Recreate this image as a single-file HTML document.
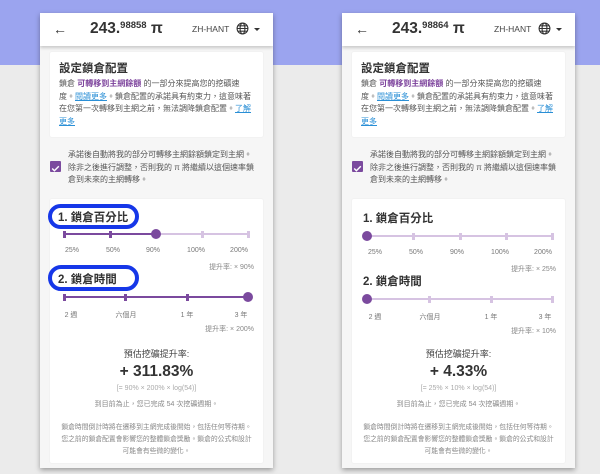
<!DOCTYPE html>
<html><head><meta charset="utf-8"><style>
*{margin:0;padding:0;box-sizing:border-box}
body{width:600px;height:474px;overflow:hidden;position:relative;background:#ebebeb;font-family:"Liberation Sans","Noto Sans CJK TC",sans-serif;color:#333}
.top{position:absolute;left:0;top:0;width:600px;height:65px;background:#9ba4ef}
.panel{position:absolute;top:13px;width:233px;height:455px;background:#f6f6f6;box-shadow:0 2px 5px rgba(0,0,0,.35);overflow:hidden}
.hdr{position:absolute;left:0;top:0;width:233px;height:33px;background:#fff;box-shadow:0 2px 3px rgba(0,0,0,.18);z-index:2}
.arrow{position:absolute;left:13px;top:8px;font-size:14px;color:#333}
.bal{position:absolute;left:50px;top:7px;font-size:15.5px;font-weight:bold;color:#333;white-space:nowrap}
.bal sup{font-size:9.5px;font-weight:bold;vertical-align:5px}
.lang{position:absolute;left:152px;top:11px;font-size:8.5px;color:#444}
.globe{position:absolute;left:196px;top:9px}
.caret{position:absolute;left:214px;top:15px;width:0;height:0;border-left:3px solid transparent;border-right:3px solid transparent;border-top:3.5px solid #333}
.card{position:absolute;left:10px;width:213px;background:#fff;border-radius:2px;box-shadow:0 0 2px rgba(0,0,0,.06)}
.t{position:absolute;white-space:nowrap}
.ttl{font-size:11.5px;font-weight:bold;color:#333}
.body{font-size:8px;color:#555;line-height:12.5px}
.pur{color:#7a3f9a;font-weight:bold}
.lnk{color:#2a8fd6;text-decoration:underline}
.cb{position:absolute;left:10px;top:148px;width:11px;height:11px;background:#7b4a9e;border-radius:1px}
.track{position:absolute;height:2px;background:#d6c3e2}
.fill{position:absolute;height:2px;background:#7b4a9e}
.tk{position:absolute;width:3px;height:7px;margin-left:-1.5px;margin-top:-2.5px}
.knob{position:absolute;width:10px;height:10px;border-radius:5px;background:#7b4a9e;margin-left:-5px;margin-top:-4px}
.lbl{position:absolute;font-size:7px;color:#777;transform:translateX(-50%);white-space:nowrap}
.rate{position:absolute;right:19px;font-size:7px;color:#888;white-space:nowrap}
.c{position:absolute;left:0;width:233px;text-align:center;white-space:nowrap}
.ring{position:absolute;border:4px solid #1637e8;border-radius:13px}
</style></head><body>
<div class="top"></div>

<!-- LEFT PANEL -->
<div class="panel" style="left:40px">
 <div class="hdr">
  <div class="arrow">←</div>
  <div class="bal">243.<sup>98858</sup> π</div>
  <div class="lang">ZH-HANT</div>
  <svg class="globe" width="13" height="13" viewBox="0 0 24 24"><circle cx="12" cy="12" r="10" fill="none" stroke="#333" stroke-width="2"/><ellipse cx="12" cy="12" rx="4.5" ry="10" fill="none" stroke="#333" stroke-width="2"/><path d="M2 12h20M4 7h16M4 17h16" stroke="#333" stroke-width="2"/></svg>
  <div class="caret"></div>
 </div>
 <div class="card" style="top:39px;height:85px">
  <div class="t ttl" style="left:9px;top:8px">設定鎖倉配置</div>
  <div class="t body" style="left:9px;top:26px">鎖倉 <span class="pur">可轉移到主網餘額</span> 的一部分來提高您的挖礦速<br>度。<span class="lnk">閱讀更多</span>。鎖倉配置的承諾具有約束力，這意味著<br>在您第一次轉移到主網之前，無法調降鎖倉配置。<span class="lnk">了解</span><br><span class="lnk">更多</span></div>
 </div>
 <div class="cb"><svg width="11" height="11" viewBox="0 0 10 10"><path d="M2 5l2 2 4-4" stroke="#fff" stroke-width="1.3" fill="none"/></svg></div>
 <div class="t body" style="left:28px;top:136px">承諾後自動將我的部分可轉移主網餘額鎖定到主網。<br>除非之後進行調整，否則我的 π 將繼續以這個速率鎖<br>倉到未來的主網轉移。</div>
 <div class="card" style="top:186px;height:264px"></div>
 <div class="t ttl" style="left:18px;top:196px">1. 鎖倉百分比</div>
 <div class="track" style="left:24px;width:184px;top:220px"></div>
 <div class="fill" style="left:24px;width:92px;top:220px"></div>
 <div class="tk" style="left:24px;top:220px;background:#7b4a9e"></div>
 <div class="tk" style="left:70px;top:220px;background:#7b4a9e"></div>
 <div class="tk" style="left:162px;top:220px;background:#d6c3e2"></div>
 <div class="tk" style="left:208px;top:220px;background:#d6c3e2"></div>
 <div class="knob" style="left:116px;top:220px"></div>
 <div class="lbl" style="left:32px;top:234px">25%</div><div class="lbl" style="left:73px;top:234px">50%</div><div class="lbl" style="left:113px;top:234px">90%</div><div class="lbl" style="left:156px;top:234px">100%</div><div class="lbl" style="left:199px;top:234px">200%</div>
 <div class="rate" style="top:249px">提升率: × 90%</div>
 <div class="t ttl" style="left:18px;top:258px">2. 鎖倉時間</div>
 <div class="track" style="left:24px;width:184px;top:283px"></div>
 <div class="fill" style="left:24px;width:184px;top:283px"></div>
 <div class="tk" style="left:24px;top:283px;background:#7b4a9e"></div>
 <div class="tk" style="left:85px;top:283px;background:#7b4a9e"></div>
 <div class="tk" style="left:147px;top:283px;background:#7b4a9e"></div>
 <div class="knob" style="left:208px;top:283px"></div>
 <div class="lbl" style="left:31px;top:297px">2 週</div><div class="lbl" style="left:86px;top:297px">六個月</div><div class="lbl" style="left:147px;top:297px">1 年</div><div class="lbl" style="left:201px;top:297px">3 年</div>
 <div class="rate" style="top:311px">提升率: × 200%</div>
 <div class="c" style="top:334px;font-size:9px;color:#444">預估挖礦提升率:</div>
 <div class="c" style="top:350px;font-size:15.5px;font-weight:bold;color:#333">+ 311.83%</div>
 <div class="c" style="top:372px;font-size:7px;color:#aaa">[= 90% × 200% × log(54)]</div>
 <div class="c" style="top:386px;font-size:7px;color:#888">到目前為止，您已完成 54 次挖礦週期。</div>
 <div class="c" style="top:409px;font-size:6.8px;color:#888;line-height:12px">鎖倉時間倒計時將在遷移到主網完成後開始，包括任何等待期。<br>您之前的鎖倉配置會影響您的整體鎖倉獎勵。鎖倉的公式和設計<br>可能會有些微的變化。</div>
 <div class="ring" style="left:8px;top:191px;width:91px;height:25px"></div>
 <div class="ring" style="left:8px;top:252px;width:91px;height:26px"></div>
</div>

<!-- RIGHT PANEL -->
<div class="panel" style="left:342px">
 <div class="hdr">
  <div class="arrow">←</div>
  <div class="bal">243.<sup>98864</sup> π</div>
  <div class="lang">ZH-HANT</div>
  <svg class="globe" width="13" height="13" viewBox="0 0 24 24"><circle cx="12" cy="12" r="10" fill="none" stroke="#333" stroke-width="2"/><ellipse cx="12" cy="12" rx="4.5" ry="10" fill="none" stroke="#333" stroke-width="2"/><path d="M2 12h20M4 7h16M4 17h16" stroke="#333" stroke-width="2"/></svg>
  <div class="caret"></div>
 </div>
 <div class="card" style="top:39px;height:85px">
  <div class="t ttl" style="left:9px;top:8px">設定鎖倉配置</div>
  <div class="t body" style="left:9px;top:26px">鎖倉 <span class="pur">可轉移到主網餘額</span> 的一部分來提高您的挖礦速<br>度。<span class="lnk">閱讀更多</span>。鎖倉配置的承諾具有約束力，這意味著<br>在您第一次轉移到主網之前，無法調降鎖倉配置。<span class="lnk">了解</span><br><span class="lnk">更多</span></div>
 </div>
 <div class="cb"><svg width="11" height="11" viewBox="0 0 10 10"><path d="M2 5l2 2 4-4" stroke="#fff" stroke-width="1.3" fill="none"/></svg></div>
 <div class="t body" style="left:28px;top:136px">承諾後自動將我的部分可轉移主網餘額鎖定到主網。<br>除非之後進行調整，否則我的 π 將繼續以這個速率鎖<br>倉到未來的主網轉移。</div>
 <div class="card" style="top:186px;height:264px"></div>
 <div class="t ttl" style="left:21px;top:197px">1. 鎖倉百分比</div>
 <div class="track" style="left:25px;width:185px;top:222px"></div>
 <div class="tk" style="left:71px;top:222px;background:#d6c3e2"></div>
 <div class="tk" style="left:118px;top:222px;background:#d6c3e2"></div>
 <div class="tk" style="left:164px;top:222px;background:#d6c3e2"></div>
 <div class="tk" style="left:210px;top:222px;background:#d6c3e2"></div>
 <div class="knob" style="left:25px;top:222px"></div>
 <div class="lbl" style="left:33px;top:236px">25%</div><div class="lbl" style="left:74px;top:236px">50%</div><div class="lbl" style="left:115px;top:236px">90%</div><div class="lbl" style="left:158px;top:236px">100%</div><div class="lbl" style="left:201px;top:236px">200%</div>
 <div class="rate" style="top:251px">提升率: × 25%</div>
 <div class="t ttl" style="left:21px;top:260px">2. 鎖倉時間</div>
 <div class="track" style="left:25px;width:185px;top:285px"></div>
 <div class="tk" style="left:87px;top:285px;background:#d6c3e2"></div>
 <div class="tk" style="left:149px;top:285px;background:#d6c3e2"></div>
 <div class="tk" style="left:210px;top:285px;background:#d6c3e2"></div>
 <div class="knob" style="left:25px;top:285px"></div>
 <div class="lbl" style="left:33px;top:299px">2 週</div><div class="lbl" style="left:88px;top:299px">六個月</div><div class="lbl" style="left:149px;top:299px">1 年</div><div class="lbl" style="left:203px;top:299px">3 年</div>
 <div class="rate" style="top:313px">提升率: × 10%</div>
 <div class="c" style="top:334px;font-size:9px;color:#444">預估挖礦提升率:</div>
 <div class="c" style="top:350px;font-size:15.5px;font-weight:bold;color:#333">+ 4.33%</div>
 <div class="c" style="top:372px;font-size:7px;color:#aaa">[= 25% × 10% × log(54)]</div>
 <div class="c" style="top:386px;font-size:7px;color:#888">到目前為止，您已完成 54 次挖礦週期。</div>
 <div class="c" style="top:409px;font-size:6.8px;color:#888;line-height:12px">鎖倉時間倒計時將在遷移到主網完成後開始，包括任何等待期。<br>您之前的鎖倉配置會影響您的整體鎖倉獎勵。鎖倉的公式和設計<br>可能會有些微的變化。</div>
</div>
</body></html>
